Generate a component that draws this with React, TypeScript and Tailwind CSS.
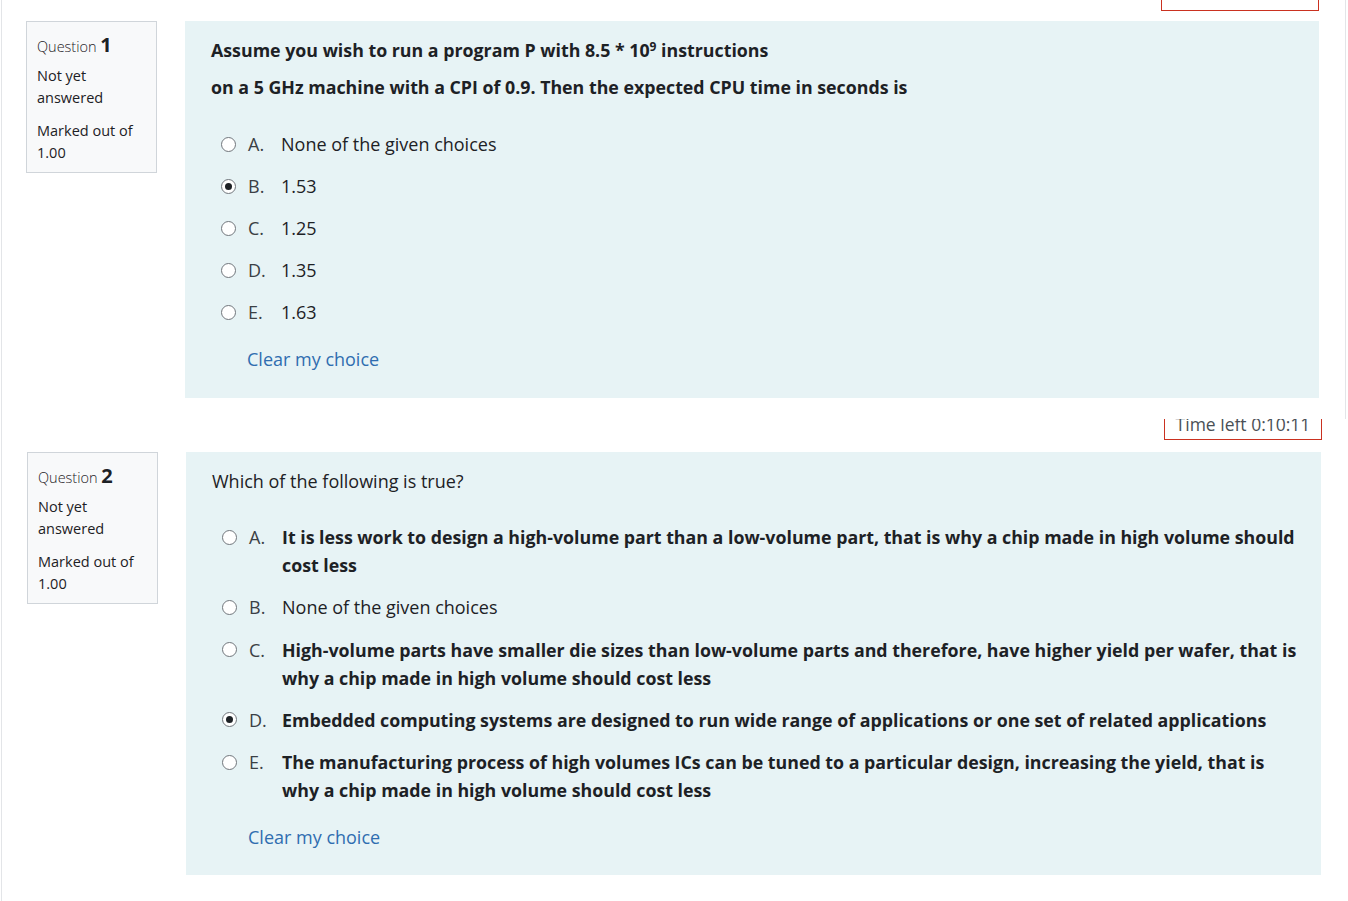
import React from "react";

type Opt = { letter: string; lines: string[]; bold?: boolean; checked?: boolean };

function Radio({ checked }: { checked?: boolean }) {
  return (
    <span className="mt-[6.5px] flex h-[15px] w-[15px] shrink-0 items-center justify-center rounded-full border-[1.5px] border-[#71767c] bg-white">
      {checked && <span className="h-[7px] w-[7px] rounded-full bg-[#1d2125]" />}
    </span>
  );
}

function Option({ o, first, gap }: { o: Opt; first?: boolean; gap: string }) {
  return (
    <div className={`flex pl-[10px] ${first ? "" : gap}`}>
      <Radio checked={o.checked} />
      <span className="ml-[12px] w-[33px] shrink-0 text-[#3b4045]">{o.letter}.</span>
      <span className={`whitespace-nowrap ${o.bold ? "text-[17.8px] font-bold text-[#1d2125]" : "text-[#1d2125]"}`}>
        {o.lines.map((l, i) => (
          <React.Fragment key={i}>
            {i > 0 && <br />}
            {l}
          </React.Fragment>
        ))}
      </span>
    </div>
  );
}

function Info({ n }: { n: number }) {
  return (
    <div className="h-[152px] w-[131px] shrink-0 border border-[#d0d5da] bg-[#f8f9fa] px-[10px] pt-[9px] text-[#1d2125]">
      <div className="leading-[28px]">
        <span className="text-[14.5px] font-light">Question </span>
        <span className="text-[20px] font-bold">{n}</span>
      </div>
      <div className="mt-[4px] text-[14.5px] leading-[22px]">
        Not yet
        <br />
        answered
      </div>
      <div className="mt-[11px] text-[14.5px] leading-[22px]">
        Marked out of
        <br />
        1.00
      </div>
    </div>
  );
}

function Timer({ cls, text }: { cls: string; text?: boolean }) {
  return (
    <div className={`absolute h-[45px] w-[158px] border-x border-b border-[#ca3120] bg-white ${cls}`}>
      {text && (
        <div className="flex h-full items-end justify-center pb-[5px] text-[17.5px] leading-[20px] text-[#4a4f55]">
          Time left 0:10:11
        </div>
      )}
    </div>
  );
}

const q1: Opt[] = [
  { letter: "A", lines: ["None of the given choices"] },
  { letter: "B", lines: ["1.53"], checked: true },
  { letter: "C", lines: ["1.25"] },
  { letter: "D", lines: ["1.35"] },
  { letter: "E", lines: ["1.63"] },
];

const q2: Opt[] = [
  {
    letter: "A",
    bold: true,
    lines: [
      "It is less work to design a high-volume part than a low-volume part, that is why a chip made in high volume should",
      "cost less",
    ],
  },
  { letter: "B", lines: ["None of the given choices"] },
  {
    letter: "C",
    bold: true,
    lines: [
      "High-volume parts have smaller die sizes than low-volume parts and therefore, have higher yield per wafer, that is",
      "why a chip made in high volume should cost less",
    ],
  },
  {
    letter: "D",
    bold: true,
    checked: true,
    lines: ["Embedded computing systems are designed to run wide range of applications or one set of related applications"],
  },
  {
    letter: "E",
    bold: true,
    lines: [
      "The manufacturing process of high volumes ICs can be tuned to a particular design, increasing the yield, that is",
      "why a chip made in high volume should cost less",
    ],
  },
];

export default function App() {
  return (
    <div
      className="h-[901px] w-[1348px] overflow-hidden bg-white text-[18px] leading-[28px] text-[#1d2125]"
      style={{ fontFamily: '"Open Sans", "Noto Sans", sans-serif' }}
    >
      {/* first capture */}
      <div className="relative ml-px h-[419px] w-[1345px] overflow-hidden border-x border-[#e3e5e8]">
        <Timer cls="left-[1159px] top-[-34px]" />
        <div className="flex gap-[28px] pl-[24px] pt-[21px]">
          <Info n={1} />
          <div className="h-[377px] w-[1134px] bg-[#e7f3f5] px-[26px] pt-[15px]">
            <p className="text-[17.8px] font-bold">
              Assume you wish to run a program P with 8.5 * 10
              <sup className="text-[12px]">9</sup> instructions
            </p>
            <p className="mt-[9px] text-[17.8px] font-bold">
              on a 5 GHz machine with a CPI of 0.9. Then the expected CPU time in seconds is
            </p>
            <div className="mt-[29px]">
              {q1.map((o, i) => (
                <Option key={o.letter} o={o} first={i === 0} gap="mt-[14px]" />
              ))}
            </div>
            <div className="mt-[19px] pl-[36px] text-[#2f6db0]">Clear my choice</div>
          </div>
        </div>
      </div>

      {/* second capture */}
      <div className="relative ml-px h-[482px] overflow-hidden border-l border-[#e3e5e8]">
        <Timer cls="left-[1162px] top-[-24px]" text />
        <div className="flex gap-[28px] pl-[25px] pt-[33px]">
          <Info n={2} />
          <div className="h-[423px] w-[1135px] bg-[#e7f3f5] px-[26px] pt-[15px]">
            <p>Which of the following is true?</p>
            <div className="mt-[28px]">
              {q2.map((o, i) => (
                <Option key={o.letter} o={o} first={i === 0} gap="mt-[14.25px]" />
              ))}
            </div>
            <div className="mt-[19px] pl-[36px] text-[#2f6db0]">Clear my choice</div>
          </div>
        </div>
      </div>
    </div>
  );
}
